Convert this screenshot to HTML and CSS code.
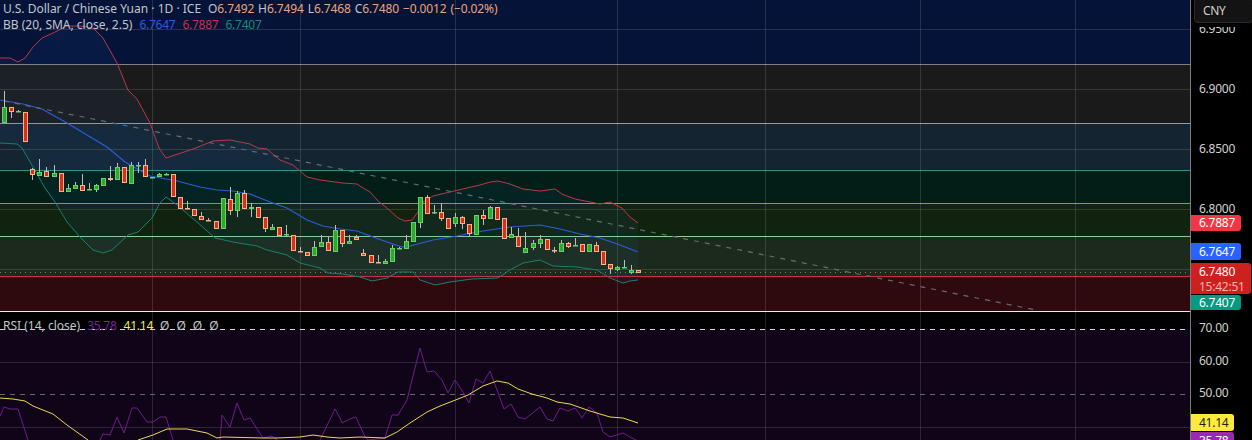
FILE: index.html
```html
<!DOCTYPE html>
<html lang="en">

<head>
    <meta charset="UTF-8">
    <title>USDCNY chart</title>
    <link rel="stylesheet" href="styles.css">
</head>

<body>
    <div class="chart">
        <!-- panes on the left, price scale on the right -->
        <div class="panes">
            <div class="pane main-pane">
                <div class="band band-navy"></div>
                <div class="band band-grey"></div>
                <div class="band band-slate"></div>
                <div class="band band-teal"></div>
                <div class="band band-moss"></div>
                <div class="band band-olive"></div>
                <div class="band band-red"></div>
                <svg id="main-plot" class="plot" width="1190" height="311"></svg>
                <div class="legend">
                    <div class="legend-row">
                        <span class="name">U.S. Dollar / Chinese Yuan · 1D · ICE</span>
                        <span class="ohlc">
                            <span class="name">O</span>6.7492
                            <span class="name">H</span>6.7494
                            <span class="name">L</span>6.7468
                            <span class="name">C</span>6.7480
                            −0.0012 (−0.02%)
                        </span>
                    </div>
                    <div class="legend-row">
                        <span class="name">BB (20, SMA, close, 2.5)</span>
                        <span class="val-blue">6.7647</span>
                        <span class="val-red">6.7887</span>
                        <span class="val-teal">6.7407</span>
                    </div>
                </div>
            </div>
            <div class="pane rsi-pane">
                <div class="rsi-top"></div>
                <div class="rsi-body"></div>
                <svg id="rsi-plot" class="plot" width="1190" height="128"></svg>
                <div class="legend rsi-legend">
                    <div class="legend-row">
                        <span class="name">RSI (14, close)</span>
                        <span class="val-purple">35.78</span>
                        <span class="val-yellow">41.14</span>
                        <span class="name">Ø</span>
                        <span class="name">Ø</span>
                        <span class="name">Ø</span>
                        <span class="name">Ø</span>
                    </div>
                </div>
            </div>
        </div>

        <div class="scale">
            <div class="scale-main">
                <div class="ticks">
                    <div class="tick">6.9500</div>
                    <div class="tick">6.9000</div>
                    <div class="tick">6.8500</div>
                    <div class="tick">6.8000</div>
                </div>
                <div class="currency">CNY</div>
                <div class="tag tag-upper">6.7887</div>
                <div class="tag tag-basis">6.7647</div>
                <div class="tag tag-last">6.7480<span class="countdown">15:42:51</span></div>
                <div class="tag tag-lower">6.7407</div>
            </div>
            <div class="scale-rsi">
                <div class="tick rsi-tick">70.00</div>
                <div class="tick rsi-tick">60.00</div>
                <div class="tick rsi-tick">50.00</div>
                <div class="tag tag-ma">41.14</div>
                <div class="tag tag-rsi">35.78</div>
            </div>
        </div>
    </div>

    <script src="chart.js"></script>
</body>
</html>
```

FILE: styles.css
```css
body {
    margin: 0;
    background-color: #000;
    font-family: "Noto Sans", sans-serif;
    font-size: 12px;
    overflow: hidden;
}

.chart {
    display: flex;
    width: 1252px;
    height: 440px;
    overflow: hidden;
}

.panes {
    width: 1190px;
    flex: none;
}

.pane {
    position: relative;
}

.main-pane {
    height: 311px;
    border-bottom: 1px solid #f4e9e2;
}

.rsi-pane {
    height: 128px;
}

/* colored zones behind the candles */
.band {
    border-top: 1px solid transparent;
    box-sizing: border-box;
}

.band-navy { height: 64px; background-color: #051338; border-top: none; }
.band-grey { height: 59px; background-color: #1a1a1a; border-top-color: #7d8088; }
.band-slate { height: 47px; background-color: #142431; border-top-color: #6da5d3; }
.band-teal { height: 33px; background-color: #021e17; border-top-color: #30907f; }
.band-moss { height: 33px; background-color: #11220f; border-top-color: #5fae60; }
.band-olive { height: 40px; background-color: #1b2a1a; border-top-color: #8fd08e; }
.band-red { height: 35px; background-color: #2e0a0e; border-top-color: #c8323f; }

.rsi-top {
    height: 17px;
    background-color: #000;
}

.rsi-body {
    height: 111px;
    background-color: #100418;
}

.plot {
    position: absolute;
    top: 0;
    left: 0;
}

/* svg line classes */
.grid {
    stroke: #fff;
    stroke-opacity: 0.13;
    stroke-width: 1;
}

.price-line {
    stroke: #e8a583;
    stroke-opacity: 0.6;
    stroke-width: 1;
    stroke-dasharray: 1 4;
}

.trend {
    stroke: #686c72;
    stroke-width: 1.2;
    stroke-dasharray: 5 6;
}

.bb-fill {
    fill: #2f7fd8;
    fill-opacity: 0.07;
}

.series {
    fill: none;
    stroke-width: 1;
    stroke-linejoin: round;
}

.bb-upper { stroke: #b8394a; }
.bb-basis { stroke: #2a5ed8; stroke-width: 1.2; }
.bb-lower { stroke: #1a8070; }
.rsi-line { stroke: #701c8c; }
.rsi-ma { stroke: #ecd84c; }

.rsi-upper {
    stroke: #d6d3da;
    stroke-width: 1;
    stroke-dasharray: 5 5;
}

.rsi-mid {
    stroke: #6b6473;
    stroke-width: 1;
    stroke-dasharray: 5 5;
}

.wick {
    stroke: #bdbdbd;
    stroke-width: 1;
}

.body-up {
    fill: #2ea82f;
    stroke: #68d268;
}

.body-down {
    fill: #d9301c;
    stroke: #f9b48c;
}

/* text above the plot */
.legend {
    position: absolute;
    top: 1px;
    left: 3px;
    line-height: 16px;
    white-space: nowrap;
}

.rsi-legend {
    top: 6px;
}

.legend-row {
    display: flex;
    gap: 7px;
}

.name {
    color: #c2c5cc;
}

.ohlc {
    color: #eaa47e;
    word-spacing: 0.8px;
    letter-spacing: -0.1px;
}

.val-blue, .val-red, .val-teal, .val-purple, .val-yellow {
    letter-spacing: -0.25px;
}

.val-blue { color: #2a5ee0; }
.val-red { color: #c9304a; }
.val-teal { color: #118c7a; }
.val-purple { color: #7b1fa2; }
.val-yellow { color: #f2e65a; }

/* price scale */
.scale {
    flex: 1;
    border-left: 1px solid #787b80;
    color: #d0d0d0;
    letter-spacing: -0.25px;
}

.scale-main {
    position: relative;
    height: 312px;
}

.ticks {
    margin-top: -1px;
}

.tick {
    height: 60px;
    line-height: 60px;
    padding-left: 8px;
}

.scale-rsi {
    position: relative;
    padding-top: 1px;
    height: 127px;
}

.rsi-tick {
    height: 32.5px;
    line-height: 32.5px;
}

/* the shadow hides the top of the tick under the box */
.currency {
    position: absolute;
    top: -1px;
    left: 3px;
    right: -1px;
    height: 25px;
    line-height: 24px;
    box-sizing: border-box;
    padding-left: 8px;
    background-color: #131313;
    border: 1px solid #2b2b2b;
    border-radius: 4px;
    box-shadow: 0 4px 0 #000;
    letter-spacing: -0.4px;
}

.tag {
    position: absolute;
    left: 0;
    padding-left: 8px;
    box-sizing: border-box;
    color: #fff;
    border-radius: 0 3px 3px 0;
}

.tag-upper { top: 216px; width: 50px; height: 16px; line-height: 16px; background-color: #f23645; }
.tag-basis { top: 244px; width: 50px; height: 17px; line-height: 17px; background-color: #2962ff; }
.tag-lower { top: 296px; width: 50px; height: 15px; line-height: 15px; background-color: #089981; }

.tag-last {
    top: 264px;
    width: 60px;
    height: 31px;
    line-height: 15px;
    padding-top: 1px;
    background-color: #cf2020;
}

.countdown {
    display: block;
    color: #f3b4ae;
}

.tag-ma { top: 103px; width: 43px; height: 17px; line-height: 17px; background-color: #ffe93b; color: #222; }
.tag-rsi { top: 121px; width: 43px; height: 17px; line-height: 17px; background-color: #9c27b0; }
```

FILE: chart.js
```js
// x centers drift slightly, so each candle keeps its own column
// [x, high, top, bottom, low, up?]
const candles = [
    [4, 91, 107, 123, 123, 1], [11, 107, 107, 112, 118, 0], [18, 110, 111, 112, 112, 1], [25, 112, 112, 142, 142, 0],
    [32, 168, 169, 175, 180, 0], [39, 159, 172, 176, 176, 1], [46, 167, 171, 177, 177, 0], [54, 165, 173, 177, 177, 1],
    [61, 173, 173, 192, 192, 0], [68, 184, 188, 192, 192, 1], [75, 182, 185, 189, 189, 1], [82, 174, 185, 191, 191, 0],
    [89, 183, 189, 190, 190, 1], [96, 184, 185, 190, 192, 1], [103, 178, 178, 186, 186, 1], [110, 166, 178, 180, 181, 0],
    [117, 163, 167, 180, 180, 1], [124, 167, 167, 183, 183, 0], [131, 162, 165, 184, 184, 1], [138, 162, 165, 166, 173, 1],
    [145, 159, 165, 177, 177, 0], [152, 177, 177, 178, 178, 1], [159, 173, 174, 177, 177, 1], [166, 173, 174, 175, 175, 1],
    [173, 174, 174, 197, 197, 0], [180, 197, 197, 209, 209, 0], [187, 201, 208, 209, 209, 0], [194, 209, 209, 216, 216, 0],
    [201, 212, 216, 220, 220, 0], [208, 218, 220, 221, 221, 0], [216, 221, 221, 229, 229, 0], [223, 198, 198, 229, 229, 1],
    [230, 187, 199, 211, 215, 0], [237, 191, 193, 211, 217, 1], [244, 190, 193, 209, 209, 0], [251, 203, 207, 209, 217, 1],
    [258, 207, 207, 218, 218, 0], [265, 217, 217, 229, 232, 0], [272, 224, 227, 230, 230, 1], [279, 227, 227, 236, 236, 0],
    [286, 225, 234, 235, 236, 1], [293, 235, 235, 251, 251, 0], [300, 247, 251, 252, 252, 0], [307, 252, 252, 256, 256, 0],
    [314, 241, 247, 256, 256, 1], [321, 235, 242, 247, 247, 1], [328, 237, 242, 251, 251, 0], [335, 225, 230, 252, 252, 1],
    [342, 230, 230, 244, 247, 0], [349, 235, 241, 244, 244, 1], [356, 235, 237, 240, 240, 0], [363, 249, 253, 256, 256, 0],
    [371, 255, 255, 263, 263, 0], [378, 255, 262, 263, 263, 0], [385, 259, 261, 264, 264, 1], [392, 245, 248, 262, 262, 1],
    [399, 247, 248, 249, 249, 1], [406, 235, 241, 249, 249, 1], [413, 222, 222, 242, 242, 1], [420, 197, 197, 223, 228, 1],
    [427, 195, 197, 214, 214, 0], [434, 205, 212, 213, 214, 1], [441, 203, 212, 219, 221, 0], [448, 218, 218, 229, 229, 0],
    [455, 213, 217, 224, 227, 1], [462, 216, 217, 224, 229, 0], [469, 224, 224, 234, 236, 0], [476, 215, 215, 235, 235, 1],
    [483, 210, 215, 219, 225, 0], [490, 206, 207, 219, 219, 1], [497, 207, 207, 220, 220, 0], [504, 218, 218, 239, 239, 0],
    [511, 227, 234, 238, 238, 1], [518, 228, 236, 247, 247, 0], [525, 232, 248, 253, 253, 1], [533, 240, 243, 248, 250, 1],
    [540, 235, 239, 244, 248, 1], [547, 239, 239, 250, 250, 0], [554, 247, 250, 251, 253, 0], [561, 240, 243, 252, 252, 1],
    [568, 242, 243, 247, 248, 0], [575, 238, 245, 246, 246, 1], [582, 244, 244, 252, 252, 0], [589, 244, 244, 252, 252, 1],
    [596, 242, 245, 252, 252, 0], [603, 251, 251, 265, 265, 0], [610, 264, 264, 269, 274, 0], [617, 266, 267, 270, 271, 1],
    [624, 260, 267, 268, 268, 1], [631, 265, 270, 273, 274, 1], [638, 270, 270, 273, 273, 0]
];

const upper = "0,58 10,58 18,62 25,58 33,47 42,38 53,33 67,26 80,26 93,28 103,38 117,63 128,90 137,99 150,123 159,148 166,158 193,149 213,141 230,140 250,144 258,148 267,149 280,160 293,165 307,177 320,180 343,183 357,184 363,188 370,192 378,201 387,208 398,218 405,221 412,220 418,212 423,202 433,196 450,192 467,188 480,185 490,182 498,181 510,184 523,189 540,191 555,189 562,194 575,199 590,202 600,204 610,202 622,208 630,217 638,223";
const basis = "0,100 23,104 42,109 67,123 107,147 125,162 150,176 177,181 200,187 217,190 233,191 250,194 270,202 287,208 307,220 323,226 340,229 357,231 373,237 390,243 402,247 410,246 433,240 457,236 483,231 510,227 540,225 560,229 580,234 600,238 620,245 638,252";
const lower = "0,143 17,144 22,148 33,167 45,188 55,202 67,222 80,237 93,250 103,253 112,250 128,235 138,232 152,218 160,203 166,197 177,205 197,222 215,238 233,242 257,246 267,250 287,255 300,263 320,268 328,273 343,274 360,277 372,281 387,278 398,272 413,272 420,280 435,285 450,282 472,279 498,278 510,270 523,263 540,260 553,266 577,267 597,270 610,278 623,283 630,281 638,280";

// rsi values are in page coordinates, the pane starts at y=312
const rsi = [
    "0,416 4,407 10,409 18,409 28,440",
    "100,440 103,434 110,435 117,417 124,433 132,408 137,408 147,422 153,422 160,417 166,417 173,440",
    "220,440 222,415 230,427 237,403 244,420 250,418 263,438 272,436 277,440",
    "320,440 335,409 340,418 342,423 350,419 356,417 365,437 368,440 385,438 392,415 398,415 407,400 420,348 427,372 434,371 442,380 448,393 455,380 463,392 469,403 476,379 483,383 490,371 504,409 511,404 518,417 525,419 540,407 547,419 553,421 560,408 568,411 575,408 582,418 589,407 597,413 603,432 610,437 623,433 630,437 638,441"
];
const rsiMa = [
    "0,398 13,399 25,401 33,406 53,414 67,425 88,440",
    "138,440 153,435 167,429 187,429 207,433 217,438 223,437 263,438 277,438 300,437 313,435 327,437 340,438 360,437 385,438 397,432 410,423 427,412 440,406 453,401 468,395 483,386 497,381 508,383 518,389 532,394 547,398 557,402 570,404 590,411 610,417 623,418 638,423"
];

const gridX = [152, 300, 455, 617, 765, 920, 1075];

function add(svg, tag, attrs) {
    const el = document.createElementNS("http://www.w3.org/2000/svg", tag);
    for (const key in attrs) {
        el.setAttribute(key, attrs[key]);
    }
    svg.appendChild(el);
}

function hLine(svg, y, cls) {
    add(svg, "line", { x1: 0, x2: 1190, y1: y + 0.5, y2: y + 0.5, class: cls });
}

function gridLines(svg, rows, height) {
    gridX.forEach(x => add(svg, "line", { x1: x + 0.5, x2: x + 0.5, y1: 0, y2: height, class: "grid" }));
    rows.forEach(y => hLine(svg, y, "grid"));
}

function shift(points) {
    return points.split(" ").map(p => {
        const [x, y] = p.split(",");
        return x + "," + (y - 312);
    }).join(" ");
}

const main = document.getElementById("main-plot");
gridLines(main, [29, 89, 149, 209, 269], 311);
hLine(main, 272, "price-line");

const bandEdge = upper + " " + lower.split(" ").reverse().join(" ");
add(main, "polygon", { points: bandEdge, class: "bb-fill" });
add(main, "polyline", { points: upper, class: "series bb-upper" });
add(main, "polyline", { points: basis, class: "series bb-basis" });
add(main, "polyline", { points: lower, class: "series bb-lower" });
add(main, "line", { x1: 4, y1: 101, x2: 1036, y2: 310, class: "trend" });

candles.forEach(([x, high, top, bottom, low, up]) => {
    add(main, "line", { x1: x + 0.5, x2: x + 0.5, y1: high, y2: low, class: "wick" });
    add(main, "rect", {
        x: x - 1.5,
        y: top + 0.5,
        width: 4,
        height: Math.max(bottom - top - 1, 0.5),
        class: up ? "body-up" : "body-down"
    });
});

const pane = document.getElementById("rsi-plot");
gridLines(pane, [50, 115], 128);
hLine(pane, 17, "rsi-upper");
hLine(pane, 82, "rsi-mid");
rsi.forEach(p => add(pane, "polyline", { points: shift(p), class: "series rsi-line" }));
rsiMa.forEach(p => add(pane, "polyline", { points: shift(p), class: "series rsi-ma" }));
```
